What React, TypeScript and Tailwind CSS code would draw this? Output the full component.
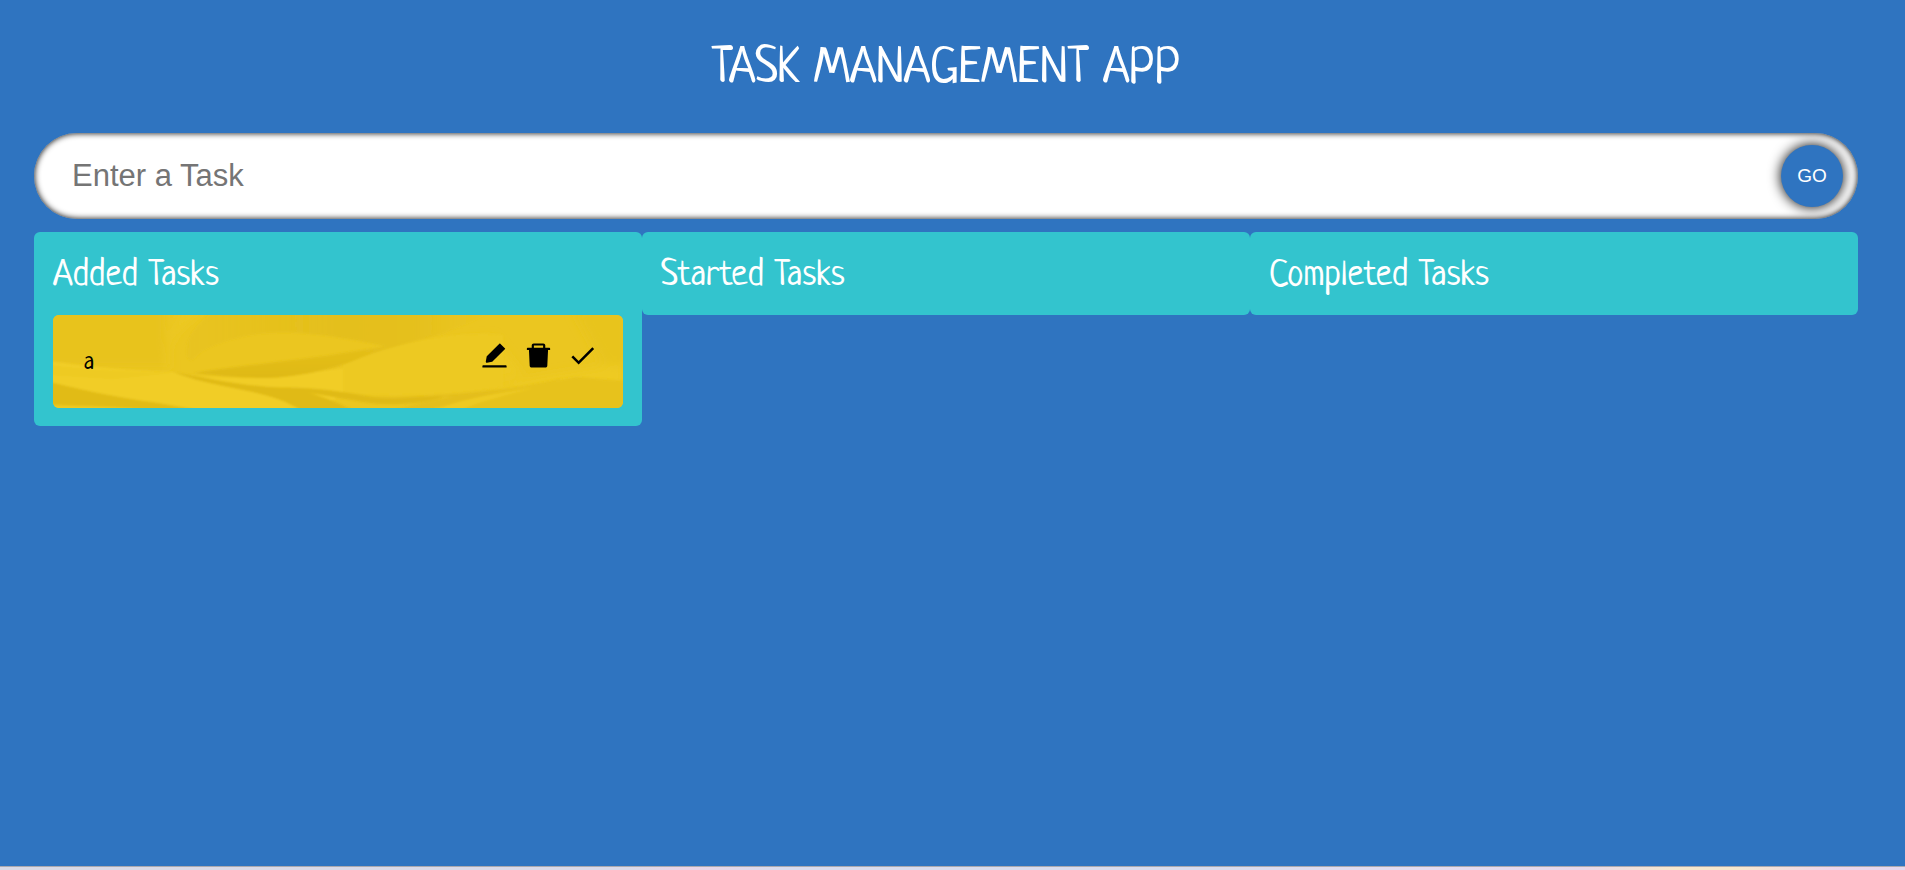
import { useState } from "react";
import type { FormEvent } from "react";
import { AiFillDelete, AiFillEdit } from "react-icons/ai";
import { MdDone } from "react-icons/md";

type Task = { id: number; text: string };

function SilkTexture() {
  return (
    <svg
      aria-hidden="true"
      className="absolute inset-0 h-full w-full"
      viewBox="0 0 570 93"
      preserveAspectRatio="none"
    >
      <defs>
        <filter id="soft" x="-10%" y="-20%" width="120%" height="140%">
          <feGaussianBlur stdDeviation="1.3" />
        </filter>
        <filter id="softer" x="-20%" y="-40%" width="140%" height="180%">
          <feGaussianBlur stdDeviation="5" />
        </filter>
        <linearGradient id="foldTop" x1="0" y1="0" x2="1" y2="0">
          <stop offset="0" stopColor="#e6c11d" stopOpacity="0.5" />
          <stop offset="0.5" stopColor="#e4bf1b" />
          <stop offset="0.75" stopColor="#e5c01c" />
          <stop offset="1" stopColor="#e9c41f" stopOpacity="0.2" />
        </linearGradient>
        <linearGradient id="foldMid" x1="0" y1="0" x2="0" y2="1">
          <stop offset="0" stopColor="#e8c31e" />
          <stop offset="1" stopColor="#dfb915" />
        </linearGradient>
      </defs>
      <rect width="570" height="93" fill="#ebc620" />
      <g filter="url(#softer)">
        <path d="M-10-10H112V52H-10Z" fill="#e8c31e" />
        <path d="M118 54C110 30 125 10 156-8H132C118 14 110 36 112 52Z" fill="#edc923" />
        <path d="M287 64C330 40 390 24 440 22L470 60C400 76 340 80 287 70Z" fill="#edc922" />
        <path d="M440 70L570 48V74H440Z" fill="#eeca23" />
        <path d="M520-5H575V50H550Z" fill="#e8c41f" />
      </g>
      <g filter="url(#soft)">
        <path d="M134 42C131 25 140 12 160-3H437C420 10 380 20 334 32C310 26 270 19 244 18C200 15 170 26 150 36C142 42 138 50 134 42Z" fill="url(#foldTop)" />
        <path d="M-3 46C30 51 80 56 120 57C170 68 250 60 297 52C340 45 380 50 400 64C370 74 330 78 297 78L250 96H-3Z" fill="#f1cd27" />
        <path d="M290 50C330 30 400 15 450 20V72C400 80 340 82 290 78Z" fill="#edc922" />
        <path d="M-3 50C30 55 80 57 120 58L60 64L-3 60Z" fill="#eeca23" />
        <path d="M140 58C190 50 250 45 297 37L334 31C370 22 390 18 410 11C380 24 340 30 307 43C280 55 240 63 210 63C185 63 160 60 140 58Z" fill="url(#foldMid)" />
        <path d="M120 57C150 62 180 70 230 73C260 76 285 88 300 95H247C235 86 215 80 190 75C160 69 140 65 120 57Z" fill="#e0ba16" />
        <path d="M215 73C250 71 280 75 320 82C350 84 375 81 395 80C380 88 340 92 310 87C280 82 250 76 215 73Z" fill="#e0ba16" />
        <path d="M-3 67C30 75 60 82 105 88L145 95H-3Z" fill="#e1bb17" />
        <path d="M-3 90C30 91 60 91 100 95H-3Z" fill="#efcb24" />
        <path d="M350 82C400 80 460 76 510 63C470 80 420 84 375 95H340C360 90 380 85 400 82Z" fill="#e4be1a" />
        <path d="M385 95C420 80 470 72 523 62L573 66V95Z" fill="#e7c21d" />
        <path d="M382 95C410 83 450 78 480 73C450 81 425 87 408 95Z" fill="#eeca24" />
      </g>
    </svg>
  );
}

function TaskCard({ task, onDelete, onAdvance }: { task: Task; onDelete: () => void; onAdvance: () => void }) {
  return (
    <li className="relative flex items-start overflow-hidden rounded-md p-[25px] text-black">
      <SilkTexture />
      <span className="relative flex-1 px-1.5 pt-2 pb-1 text-[25px] leading-[31px]">{task.text}</span>
      <div className="relative flex gap-[13px] text-[31px]">
        <button type="button" aria-label="Edit task">
          <AiFillEdit />
        </button>
        <button type="button" aria-label="Delete task" onClick={onDelete}>
          <AiFillDelete />
        </button>
        <button type="button" aria-label="Move task forward" onClick={onAdvance}>
          <MdDone />
        </button>
      </div>
    </li>
  );
}

const columns = ["Added Tasks", "Started Tasks", "Completed Tasks"];

export default function App() {
  const [draft, setDraft] = useState("");
  const [lists, setLists] = useState<Task[][]>([[{ id: 1, text: "a" }], [], []]);

  const addTask = (event: FormEvent) => {
    event.preventDefault();
    if (!draft.trim()) return;
    setLists(([added, ...rest]) => [[...added, { id: Date.now(), text: draft }], ...rest]);
    setDraft("");
  };

  const remove = (task: Task) => setLists((all) => all.map((list) => list.filter((t) => t.id !== task.id)));

  const advance = (task: Task, from: number) =>
    setLists((all) =>
      all.map((list, i) => {
        const kept = list.filter((t) => t.id !== task.id);
        return i === Math.min(from + 1, 2) ? [...kept, task] : kept;
      }),
    );

  return (
    <div className="flex min-h-screen flex-col bg-[#2f74c0] font-['Neucha','Comic_Neue',cursive] text-white">
      <main className="flex-1 pr-[47px] pl-[34px]">
        <h1 className="pt-[42px] pb-[34px] text-center text-[50px] leading-[57px]">TASK MANAGEMENT APP</h1>
        <form
          onSubmit={addTask}
          className="relative font-['Liberation_Sans',Arial,sans-serif]"
        >
          <input
            type="text"
            aria-label="Task"
            placeholder="Enter a Task"
            value={draft}
            onChange={(event) => setDraft(event.target.value)}
            className="block h-[86px] w-full rounded-full bg-white pr-24 pl-[38px] text-[31px] text-black shadow-[inset_0_0_6px_black] outline-none placeholder:text-[#757575]"
          />
          <div className="pointer-events-none absolute inset-0 flex items-center justify-end overflow-hidden rounded-full pr-[15px]">
            <button
              type="submit"
              className="pointer-events-auto size-[62px] rounded-full bg-[#2f74c0] text-[19px] text-white shadow-[0_0_13px_black]"
            >
              GO
            </button>
          </div>
        </form>
        <div className="mt-[13px] grid grid-cols-3 items-start">
          {columns.map((name, i) => (
            <section key={name} className="rounded-md bg-[#33c4ce] px-[19px] pt-[22px] pb-4">
              <h2 className="text-[37px] leading-[45px]">{name}</h2>
              {lists[i].length > 0 && (
                <ul className="mt-4 mb-0.5 flex flex-col gap-[19px]">
                  {lists[i].map((task) => (
                    <TaskCard key={task.id} task={task} onDelete={() => remove(task)} onAdvance={() => advance(task, i)} />
                  ))}
                </ul>
              )}
            </section>
          ))}
        </div>
      </main>
      <footer className="h-1 border-t border-[#aaa9b0] bg-[linear-gradient(to_right,#d9dae6_0%,#dadaea_33%,#ecd4e6_36%,#d9dcee_41%,#d8dcee_64%,#e4dcf2_75%,#e8d8ea_83%,#f8e8cc_88%,#f8e8cc_91%,#efd6ea_96%,#e4d8ee_100%)]" />
    </div>
  );
}
